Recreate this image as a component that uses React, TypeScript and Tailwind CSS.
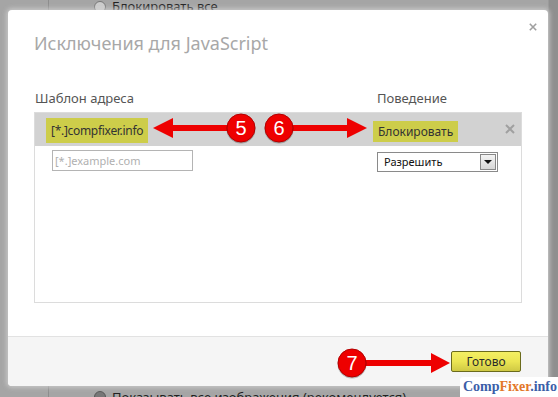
import React from "react";

function Marker({ cx, cy, n }: { cx: number; cy: number; n: string }) {
  return (
    <g>
      <circle cx={cx} cy={cy + 1} r={14.5} fill="rgba(0,0,0,0.25)" />
      <circle cx={cx} cy={cy} r={14} fill="#ee0000" stroke="#b30000" strokeWidth={1} />
      <text
        x={cx}
        y={cy + 7}
        textAnchor="middle"
        fontSize={20}
        fill="#ffffff"
        fontFamily="Liberation Sans, Arial, sans-serif"
      >
        {n}
      </text>
    </g>
  );
}

function Annotations() {
  return (
    <svg
      className="absolute inset-0 pointer-events-none"
      width={558}
      height={397}
      viewBox="0 0 558 397"
    >
      {/* 5: points left */}
      <rect x={170} y={125} width={60} height={6} fill="#ee0000" />
      <polygon points="153,128 173,118 173,138" fill="#ee0000" />
      <Marker cx={241} cy={128} n="5" />
      {/* 6: points right */}
      <rect x={280} y={125} width={70} height={6} fill="#ee0000" />
      <polygon points="367,128 347,118 347,138" fill="#ee0000" />
      <Marker cx={279} cy={128} n="6" />
      {/* 7: points right */}
      <rect x={352} y={360} width={82} height={6} fill="#ee0000" />
      <polygon points="450,363 431,353 431,373" fill="#ee0000" />
      <Marker cx={352} cy={363} n="7" />
    </svg>
  );
}

function CloseX({ size, color }: { size: number; color: string }) {
  return (
    <svg width={size} height={size} viewBox="0 0 10 10">
      <path d="M1 1 L9 9 M9 1 L1 9" stroke={color} strokeWidth={2} />
    </svg>
  );
}

export default function App() {
  return (
    <div className="relative w-[558px] h-[397px] overflow-hidden bg-[#a5a5a5] font-['Noto_Sans',sans-serif]">
      {/* page behind the modal */}
      <div className="flex h-full">
        <div className="w-[49px] border-r border-[#8d8d8d]" />
        <div className="flex-1 flex flex-col justify-between pl-[45px]">
          <div className="flex items-center gap-[6px] -mt-[3px]">
            <span className="w-[12px] h-[12px] rounded-full border border-[#777] bg-[#ccc]" />
            <span className="text-[13px] text-[#222]">Блокировать все</span>
          </div>
          <div className="flex items-center gap-[6px] -mb-[10px]">
            <span className="w-[12px] h-[12px] rounded-full border border-[#555] bg-[#777]" />
            <span className="text-[13px] text-[#222]">Показывать все изображения (рекомендуется)</span>
          </div>
        </div>
        <div className="w-[10px] bg-[#8f8f8f] border-l border-[#9a9a9a]" />
      </div>

      {/* modal */}
      <div className="absolute left-[8px] top-[10px] w-[540px] h-[376px] bg-white rounded-[4px] shadow-[0_0_4px_2px_rgba(210,210,210,0.7)] flex flex-col overflow-hidden">
        <div className="relative px-[26px] pt-[21px]">
          <h1 className="text-[18px] leading-[24px] text-[#a8a8a8] font-normal">
            Исключения для JavaScript
          </h1>
          <span className="absolute right-[11px] top-[13px]">
            <CloseX size={8} color="#a0a0a0" />
          </span>
        </div>

        <div className="flex-1 px-[26px] pt-[35px]">
          <div className="flex text-[13px] leading-[16px] text-[#555] mb-[6px]">
            <div className="w-[343px] pl-[1px]">Шаблон адреса</div>
            <div>Поведение</div>
          </div>

          <div className="h-[191px] border border-[#dcdcdc]">
            <div className="h-[33px] bg-[#d2d2d2] flex items-center relative">
              <div className="w-[338px] pl-[11px]">
                <span className="inline-block bg-[#cdcd4a] px-[5px] leading-[25px] text-[12px] tracking-[-0.3px] text-[#333]">
                  [*.]compfixer.info
                </span>
              </div>
              <div>
                <span className="inline-block bg-[#cdcd4a] px-[5px] leading-[21px] text-[12px] text-[#333]">
                  Блокировать
                </span>
              </div>
              <span className="absolute right-[6px] top-[11px]">
                <CloseX size={10} color="#a0a0a0" />
              </span>
            </div>
            <div className="flex items-start pt-[4px]">
              <div className="w-[342px] pl-[17px]">
                <div className="w-[141px] h-[21px] border border-[#b4b4b4] px-[2px] text-[11px] leading-[19px] text-[#b0b0b0]">
                  [*.]example.com
                </div>
              </div>
              <div className="mt-[2px] w-[121px] h-[20px] border border-[#8a8a8a] flex items-center justify-between">
                <span className="pl-[6px] text-[11px] leading-[18px] text-[#111]">Разрешить</span>
                <span className="w-[16px] h-[16px] mr-[1px] border border-[#888] bg-gradient-to-b from-[#f4f4f4] to-[#d6d6d6] flex items-center justify-center">
                  <svg width="8" height="5" viewBox="0 0 8 5">
                    <polygon points="0,0 8,0 4,4" fill="#111" />
                  </svg>
                </span>
              </div>
            </div>
          </div>
        </div>

        <div className="h-[50px] bg-[#f5f5f5] border-t border-[#e2e2e2] flex items-start justify-end pr-[27px] pt-[14px]">
          <button className="w-[70px] h-[21px] rounded-[2px] border border-[#6b6b1c] bg-gradient-to-b from-[#f4ef63] via-[#ebe553] to-[#cfc944] text-[12px] leading-[19px] text-[#2a2a2a]">
            Готово
          </button>
        </div>
      </div>

      <Annotations />

      {/* watermark */}
      <div className="absolute left-[460px] top-[377px] w-[98px] h-[20px] bg-white rounded-tl-[3px] pl-[3px] font-['Liberation_Serif',serif] font-bold text-[14px] leading-[19px] whitespace-nowrap">
        <span className="text-[#3b5ea8]">Comp</span>
        <span className="text-[#e3782a]">Fixer</span>
        <span className="text-[#3b5ea8]">.info</span>
      </div>
    </div>
  );
}
